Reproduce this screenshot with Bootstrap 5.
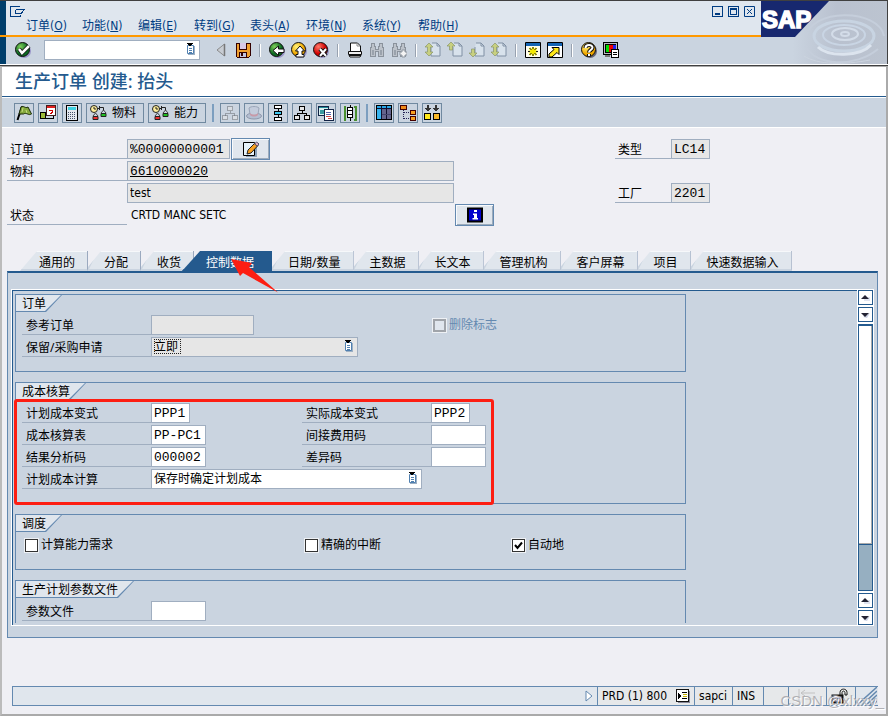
<!DOCTYPE html>
<html lang="zh-CN">
<head>
<meta charset="utf-8">
<meta name="viewport" content="width=device-width, initial-scale=1">
<title>生产订单 创建: 抬头</title>
<link href="https://cdn.jsdelivr.net/npm/bootstrap@5.3.0/dist/css/bootstrap.min.css" rel="stylesheet">
<style>
:root{--navy:#003e6b;--blue:#245a8e;--edge:#6489b0;--bar:#cad4e0;--light:#e0e6ed;--rule:#a0aec0;--ro:#e6e6e6}
body{font:12px/20px "Noto Sans","Noto Sans CJK SC",sans-serif;color:#000;background:#efeff4;min-height:100vh}
svg{display:block;flex:none}
button{padding:0;border:0;background:none;color:inherit}
.defs{position:absolute;width:0;height:0}
.i16{width:16px;height:16px}
/* window head */
.head{border-top:1px solid #404040;border-bottom:1px solid #404040;background:#fff;padding-bottom:1px}
.menu-zone{height:34px;background:#dfe6ee;border-left:6px solid var(--navy)}
.orange{height:2px;background:#f90}
.std-bar{height:27px;background:var(--bar);border-left:6px solid var(--navy);padding:0 0 1px 6px}
.menu-row{height:17px;padding:0 12px 0 20px}
.menu-row a{width:56px;color:#003c82;text-decoration:none;font-size:12px;line-height:17px;white-space:nowrap}
.title-row{height:17px;padding:4px 5px 0 4px}
.win-btn{color:#003c82}
.slot{width:22px;height:22px;display:flex;align-items:center;justify-content:center}
.bar-sep{width:12px;height:13px;display:flex;justify-content:center}
.bar-sep::before{content:"";width:2px;background:linear-gradient(90deg,#98a2b0 50%,#fff 50%)}
.cmd{width:156px;height:20px;margin:0 10px}
.logo{width:127px;height:63px}
/* work area frame */
.frame{border:2px solid #aaa;border-top-width:1px;border-left-color:#bbb}
.title{background:#fff;height:30px;border-bottom:1px solid var(--blue);color:var(--blue);font-size:18px;line-height:29px;padding-left:13px;margin:0;font-weight:500}
.app-bar{height:31px;background:var(--bar);border-top:1px solid #fff;border-bottom:1px solid #fff;padding:0 12px;gap:4px}
.tb{height:20px;min-width:20px;border:1px solid #7089a0;display:flex;align-items:center;justify-content:center}
.tb-wide{width:58px;gap:2px;padding-left:3px;justify-content:flex-start}
.tb-sep{width:2px;height:18px;margin:0 2px;background:#7c9ebf}
.body-pad{padding:10px 8px 8px 5px}
/* form lines */
.line{height:20px;margin-bottom:2px}
.line-lg{height:22px;padding:1px 0}
.lab{width:120px;height:20px;border-bottom:1px solid var(--rule);padding-left:3px;line-height:22px;white-space:nowrap}
.grp .lab{width:129px;padding-left:4px}
.side .lab{width:56px}
.fld{height:20px;border:1px solid var(--rule);border-radius:0;background:#fff;padding:0 2px;color:#000;font:13px/18px "Liberation Mono",monospace;outline:0;min-width:0}
.fld[readonly],.fld:disabled{background:var(--ro);opacity:1}
.ui{font-family:"DejaVu Sans Condensed","Noto Sans","Noto Sans CJK SC",sans-serif}
.fld-ui{font:12px/18px "DejaVu Sans Condensed","Noto Sans","Noto Sans CJK SC",sans-serif}
select.fld{appearance:none;padding:0 2px}
.w4{width:39px}.w6{width:55px}.w10{width:103px}.w20{width:207px}.w27{width:271px}.w33{width:327px}
.combo{position:relative}
.combo svg{position:absolute;right:5px;top:3px;pointer-events:none}
.combo .focus-box{position:absolute;left:3px;top:2px;width:27px;height:15px;border:1px dotted #222;pointer-events:none}
.push{width:39px;height:22px;margin-left:1px;border:1px solid var(--edge);background:var(--light);box-shadow:inset 1px 1px #f8fafc,inset -1px -1px #9cabbb;display:flex;align-items:center;justify-content:center}
.left-form{width:608px}
.side-gap{margin-bottom:22px}
/* tabs */
.tabs{margin:25px 0 0 13px;height:20px}
.tab{position:relative;height:20px;padding:0 12px 0 16px;line-height:23px;background:var(--light);border-right:1px solid #9ba9bf;border-bottom:2px solid var(--bar);box-shadow:inset 0 1px #f6f8fa;clip-path:polygon(0 100%,0 16px,13px 0,100% 0,100% 100%);white-space:nowrap}
.tab::before{content:"";position:absolute;left:0;top:8px;width:6px;height:12px;background:var(--bar);clip-path:polygon(0 60%,100% 0,0 100%)}
.tab-first{padding:0 12px 0 19px;clip-path:polygon(0 100%,17px 0,100% 0,100% 100%)}
.tab-first::before{display:none}
.tab.active{margin-left:-12px;padding:0 17px 0 24px;background:var(--blue);border-color:var(--blue);box-shadow:none;color:#fff;clip-path:polygon(0 100%,18px 0,100% 0,100% 100%)}
.tab.active::before{display:none}
.panel{border:1px solid var(--edge);border-top:2px solid var(--blue);background:var(--bar);padding:16px 3px 11px 3px}
.pane{border:1px solid #fff;border-right:0;min-width:0}
.pane-in{border:solid var(--blue);border-width:1px 0 0 1px;padding:3px 2px 2px;display:flex;flex-direction:column;gap:10px}
.grp{width:671px;max-width:100%;border:1px solid var(--edge);padding-bottom:12px;position:relative}
.grp-open{border-bottom:0;padding-bottom:0}
.grp legend{float:left;width:auto;height:17px;margin:0;padding:0 16px 0 6px;font-size:12px;line-height:17px;position:relative;isolation:isolate;background:var(--edge);clip-path:polygon(0 0,100% 0,calc(100% - 16px) 100%,0 100%)}
.grp legend::before{content:"";position:absolute;z-index:-1;inset:0 1px 1px 0;background:var(--light);clip-path:polygon(0 0,100% 0,calc(100% - 16px) 100%,0 100%)}
.grp-body{clear:both;padding:3px 0 0 6px}
.col-a{width:280px}
.col-b{width:281px}
.chk{appearance:none;width:13px;height:13px;margin:0 3px 0 0;border:1px solid #333;background:#fff center/11px no-repeat;outline:1px solid #eef1f5;border-radius:0;flex:none}
.chk:checked{background-image:url("data:image/svg+xml,%3Csvg xmlns='http://www.w3.org/2000/svg' viewBox='0 0 11 11'%3E%3Cpath d='M2 5l2.500 3L9 2.500' fill='none' stroke='%23000' stroke-width='2'/%3E%3C/svg%3E")}
.chk:disabled{background-color:#e0e6ee;border:2px solid #a0a4aa}
.dim{color:var(--edge);padding-left:130px}
.chk-row{height:22px;padding:0 0 2px 3px}
.marker{position:absolute;left:-2px;top:16px;width:480px;height:106px;border:3px solid #fd1e12;border-radius:3px;pointer-events:none}
/* scroll bar */
.scroll{width:17px;background:#fff;padding:1px;gap:2px}
.sb{width:15px;height:15px;border:1px solid var(--blue);background:#fff;display:flex;align-items:center;justify-content:center}
.trough{border:1px solid var(--blue);background:#96afc1}
.thumb{height:83%;background:#fff;border-top:1px solid var(--blue);border-bottom:1px solid var(--blue);box-shadow:inset -1px -1px #aaa}
/* status bar */
.status{height:20px;margin-left:5px;border:1px solid var(--edge);border-right:0;background:var(--light)}
.cell{border-left:1px solid var(--edge);background:#e6e8ea;padding:0 4px;display:flex;align-items:center;flex:none;white-space:nowrap}
.cell-sys{width:97px;justify-content:space-between}
.cell-host{width:38px}.cell-ins{width:31px}
.cell-b{width:25px}.cell-c{width:38px}.cell-d{width:29px}.cell-e{width:23px;background:var(--light);padding:0}
.watermark{position:absolute;right:2px;bottom:4px;font:15px/18px "Liberation Sans",sans-serif;color:rgba(160,160,165,.8);text-shadow:1px 1px #fff;pointer-events:none}
</style>
<script src="https://cdn.jsdelivr.net/npm/bootstrap@5.3.0/dist/js/bootstrap.bundle.min.js"></script>
</head>
<body class="d-flex flex-column m-0">
<svg class="defs" aria-hidden="true">
<defs>
<radialGradient id="gG" cx=".35" cy=".3"><stop offset="0" stop-color="#7fd05a"/><stop offset="1" stop-color="#0c6a22"/></radialGradient>
<radialGradient id="gY" cx=".35" cy=".3"><stop offset="0" stop-color="#fff27a"/><stop offset="1" stop-color="#f0a800"/></radialGradient>
<radialGradient id="gR" cx=".35" cy=".3"><stop offset="0" stop-color="#ff7a6a"/><stop offset="1" stop-color="#d00000"/></radialGradient>
<symbol id="ok" viewBox="0 0 16 16"><circle cx="9" cy="9" r="7" fill="#9a96c8"/><circle cx="7.500" cy="7.500" r="7" fill="url(#gG)" stroke="#111"/><path d="M4 7l3 4 7-7" fill="none" stroke="#111" stroke-width="4"/><path d="M4 7l3 4 7-7" fill="none" stroke="#fff" stroke-width="2.500"/></symbol>
<symbol id="list" viewBox="0 0 9 12"><path d="M2 3h7v9H2z" fill="#9db0c4"/><path d="M1.500 2.500h6v8h-6z" fill="#fff" stroke="#5080b0"/><path d="M3 5.500h3M3 7.500h3M3 9.500h3" stroke="#5080b0"/><path d="M1 0h6v1H6v1H5v1H3V2H2V1H1z"/></symbol>
<symbol id="tri" viewBox="0 0 16 16"><path d="M11.500 2v12L4 8z" fill="#c8ccd2" stroke="#8a8a8a"/><path d="M11.500 2v12" stroke="#777" stroke-width="1.500"/></symbol>
<symbol id="save" viewBox="0 0 16 16" shape-rendering="crispEdges"><path d="M1 1h14v13l-1 1H2l-1-1z" fill="#f0a030" stroke="#300"/><path d="M4 1h8v7H4z" fill="#300"/><path d="M5 1h6v6H5z" fill="#d8c8e8"/><path d="M4 10h8v5H4z" fill="#300"/><path d="M5 11h6v4H5z" fill="#c4c4e0"/><path d="M6 11h2v3H6z" fill="#300"/></symbol>
<symbol id="back" viewBox="0 0 16 16"><circle cx="9" cy="9" r="7" fill="#9a96c8"/><circle cx="7.500" cy="7.500" r="7" fill="url(#gG)" stroke="#111"/><path d="M4 8.500L9.500 4v3H15v3.500H9.500v3z" fill="#fff" stroke="#111"/></symbol>
<symbol id="exit" viewBox="0 0 16 16"><circle cx="9" cy="9" r="7" fill="#9a96c8"/><circle cx="7.500" cy="7.500" r="7" fill="url(#gY)" stroke="#111"/><path d="M9 4L4.500 9H7v3.500H5V15h8v-2.500h-2V9h2.500z" fill="#fff" stroke="#111"/></symbol>
<symbol id="cancel" viewBox="0 0 16 16"><circle cx="9" cy="9" r="7" fill="#9a96c8"/><circle cx="7.500" cy="7.500" r="7" fill="url(#gR)" stroke="#111"/><path d="M7 7l6 7M13 7l-6 7" stroke="#111" stroke-width="4"/><path d="M7 7l6 7M13 7l-6 7" stroke="#fff" stroke-width="2"/></symbol>
<symbol id="print" viewBox="0 0 16 16"><path d="M3.500 1h7l3 3v6h-10z" fill="#fff" stroke="#111"/><path d="M10 1v3h3" fill="none" stroke="#888"/><path d="M1.500 9.500h13v3h-13z" fill="#eee" stroke="#111"/><path d="M2 13.500h12L13 15H3z" fill="#fff" stroke="#111"/></symbol>
<symbol id="find" viewBox="0 0 16 16" shape-rendering="crispEdges"><path d="M2.500 1.500h3v3h1v3h3v-3h1v-3h3v4h1v9h-5v-5h-3v5h-5v-9h1z" fill="#bcc2ca" stroke="#8a929c"/><path d="M3 8h2v5H3zM11 8h2v5h-2z" fill="#9aa2ac"/></symbol>
<symbol id="plus" viewBox="0 0 16 16"><path d="M9 10h2V8h3v2h2v3h-2v2h-3v-2H9z" fill="#f4f4f4" stroke="#9098a2"/></symbol>
<symbol id="pg" viewBox="0 0 16 16"><path d="M6 5V14h9V4l-3-3H7" fill="#d8e2ec" stroke="#8090a4"/><path d="M12 1v3h3" fill="none" stroke="#8090a4"/></symbol>
<symbol id="up" viewBox="0 0 16 16"><path d="M4 0l4 4H5.500v4h-3V4H0z" fill="#c8d080" stroke="#8a9668" stroke-width=".7"/></symbol>
<symbol id="dn" viewBox="0 0 16 16"><path d="M4 15l4-4H5.500V7h-3v4H0z" fill="#c8d080" stroke="#8a9668" stroke-width=".7"/></symbol>
<symbol id="ud" viewBox="0 0 16 16"><path d="M4 1l4 4H5.500v5H8l-4 4-4-4h2.500V5H0z" fill="#c8d080" stroke="#8a9668" stroke-width=".7"/></symbol>
<symbol id="newwin" viewBox="0 0 16 16"><path d="M.5.5h15v15H.5z" fill="#fffef0" stroke="#000"/><path d="M1 1h14v3H1z" fill="#1464b4"/><path d="M8 5v9M3.500 9.500h9M4.500 6l7 7M11.500 6l-7 7" stroke="#f2e800" stroke-width="2"/><path d="M8 5v2M8 12v2M3 9.500h2M11 9.500h2M4.500 6l2 2M11.500 6l-2 2M4.500 13l2-2M11.500 13l-2-2" stroke="#222"/></symbol>
<symbol id="short" viewBox="0 0 16 16"><path d="M.5.5h15v15H.5z" fill="#fff" stroke="#000"/><path d="M1 1h14v3H1z" fill="#1464b4"/><path d="M5 5.500h7v7l-2-2-5 4.500H2v-3l5-4.500z" fill="#ffe81a" stroke="#000"/></symbol>
<symbol id="help" viewBox="0 0 16 16"><circle cx="9" cy="9" r="7" fill="#667"/><circle cx="7.500" cy="7.500" r="7" fill="url(#gY)" stroke="#111"/><path d="M4.500 6c0-4 7-4 7-.5 0 2.500-3.500 2.500-3.500 5M8 12v2" fill="none" stroke="#111" stroke-width="4"/><path d="M4.500 6c0-4 7-4 7-.5 0 2.500-3.500 2.500-3.500 5M8 12v2" fill="none" stroke="#fff" stroke-width="2"/></symbol>
<symbol id="mon" viewBox="0 0 16 16" shape-rendering="crispEdges"><path d="M.5.5h14v12H.5z" fill="#b8bcc0" stroke="#000"/><path d="M2 2h11v9H2z" fill="#000"/><path d="M3 3h3v7H3z" fill="#0d0"/><path d="M6 3h4v7H6z" fill="#e00"/><path d="M10 3h3v4h-3z" fill="#22e"/><path d="M2 13h5v2H2z" fill="#777"/><path d="M8.500 7.500h7v8h-7z" fill="#fff" stroke="#000"/><path d="M10 10.500h4M10 12.500h4" stroke="#000"/></symbol>
<symbol id="flag" viewBox="0 0 16 16"><path d="M1.500 15L6 1.500" stroke="#000" stroke-width="2"/><path d="M5 2c3-2 4 2 7 0l3.500 7c-3 2-5-2-8 0H3z" fill="#84a83c" stroke="#1a2a08"/><path d="M7 3l-1 4M10 5l1 3" stroke="#c4dc80"/></symbol>
<symbol id="cal7" viewBox="0 0 16 16" shape-rendering="crispEdges"><path d="M.5 7.500h5v6h-5z" fill="#9cba3a" stroke="#000"/><path d="M5.500 9.500h8v4h-10" fill="none" stroke="#000"/><path d="M6.500.5h9v10h-9z" fill="#fff" stroke="#402020"/><path d="M7 1h8v2H7z" fill="#e02020"/><path d="M9 5h3v2h-1v1h-1v1" fill="none" stroke="#c00"/></symbol>
<symbol id="calc" viewBox="0 0 16 16" shape-rendering="crispEdges"><path d="M2.500.5h11v15h-11z" fill="#e4e8ee" stroke="#000"/><path d="M4 2h8v3H4z" fill="#3fd0e0"/><path d="M4 7.500h8M4 9.500h8M4 11.500h8M4 13.500h8" stroke="#46506a" stroke-dasharray="1 1"/></symbol>
<symbol id="check2" viewBox="0 0 20 16"><circle cx="4" cy="4" r="3.500" fill="#ffef9a" stroke="#222"/><path d="M4 2v2h2" fill="none" stroke="#222"/><path d="M7.500 3.500h2M9.500 1v4M9.500 2.500h4v3" fill="none" stroke="#222"/><path d="M3 11l2.500-3L8 11M11 8l2.500-3L16 8" fill="none" stroke="#444"/><path d="M3 11.500h5v3H3z" fill="#f03030" stroke="#222"/><path d="M11 8.500h5v3h-5z" fill="#20c020" stroke="#222"/></symbol>
<symbol id="tree" viewBox="0 0 16 16" shape-rendering="crispEdges"><path d="M8 5v3M3.500 11V8.500h9V11" fill="none" stroke="currentColor"/><path d="M5.500 1.500h5v4h-5zM.5 10.500h5v4h-5z" fill="#e6e6e6" stroke="currentColor"/><path d="M10.500 10.500h5v4h-5z" fill="var(--leaf,#e6e6e6)" stroke="currentColor"/></symbol>
<symbol id="hat" viewBox="0 0 16 16"><ellipse cx="8" cy="11" rx="7.500" ry="3" fill="#b4bfd2" stroke="#8d97ab"/><path d="M4 9l-1-6c2-2 8-2 10 0l-1 6c-2 2-6 2-8 0z" fill="#c3ccdc" stroke="#9aa5b8"/><path d="M4 8c2 2 6 2 8 0v2c-2 2-6 2-8 0z" fill="#c89aa8"/></symbol>
<symbol id="chain" viewBox="0 0 16 16" shape-rendering="crispEdges"><path d="M8 3v12" stroke="#000"/><path d="M4.500.5h7v3h-7zM4.500 12.500h7v3h-7z" fill="#fff" stroke="#000"/><path d="M4.500 6.500h7v3h-7z" fill="#40c8f0" stroke="#000"/></symbol>
<symbol id="copy" viewBox="0 0 16 16" shape-rendering="crispEdges"><path d="M.5 1.500h10v9H.5z" fill="#d8f0f0" stroke="#124"/><path d="M1 2h9v1H1z" fill="#1f8a98"/><path d="M2 5h4v4H2z" fill="#3a9aa0"/><path d="M6.500 4.500h9v11h-9z" fill="#fff" stroke="#124"/><path d="M8 7.500h5M8 9.500h5" stroke="#56a"/><path d="M8 11.500h5M10 13.500h4" stroke="#c44"/></symbol>
<symbol id="film" viewBox="0 0 16 16" shape-rendering="crispEdges"><path d="M4 1.500H2.500v13H4M12 1.500h1.500v13H12" fill="none" stroke="#4a9030" stroke-width="2"/><path d="M8 0v16" stroke="#000"/><path d="M5.500 2.500h5v10h-5z" fill="#fff" stroke="#000"/><path d="M6 5.500h4M6 9.500h4" stroke="#000"/></symbol>
<symbol id="table" viewBox="0 0 16 16" shape-rendering="crispEdges"><path d="M.5.5h15v14H.5z" fill="#64648c" stroke="#000"/><path d="M1 1h14v2H1z" fill="#28a8e8"/><path d="M1 3h4v11H1z" fill="#38b4ee"/><path d="M5.500 1v13M10.500 1v13M1 3.500h14" stroke="#101030"/><path d="M6 9.500h9" stroke="#44446c"/></symbol>
<symbol id="hier" viewBox="0 0 16 16" shape-rendering="crispEdges"><path d="M3.500 5v9M4 7.500h7M4 13.500h7" fill="none" stroke="#225" stroke-dasharray="1 1"/><path d="M.5.5h6v4h-6z" fill="#f08a18" stroke="#400"/><path d="M10.500 5.500h5v4h-5zM10.500 11.500h5v4h-5z" fill="#f8a020" stroke="#400"/></symbol>
<symbol id="sum" viewBox="0 0 16 16" shape-rendering="crispEdges"><path d="M3 0h2v3h2v1H6v1H5v1H3V5H2V4H1V3h2zM11 0h2v3h2v1h-1v1h-1v1h-2V5h-1V4H9V3h2z" fill="#333"/><path d="M.5 8.500h6v6h-6z" fill="#ffe81a" stroke="#000"/><path d="M9.500 8.500h6v6h-6z" fill="#f8b828" stroke="#000"/></symbol>
<symbol id="pencil" viewBox="0 0 16 16"><path d="M3 4h11v12H3z" fill="#8aa0b8"/><path d="M.5 1.500h11v13H.5z" fill="#e6f2fa" stroke="#000"/><path d="M4 13l1-4 7-7 3 2.500L8 12z" fill="#f8a020" stroke="#222"/><path d="M11.500 3l2-2L16 3l-1.500 2z" fill="#f0b8c0" stroke="#446"/></symbol>
<symbol id="info" viewBox="0 0 16 16"><path d="M1 1.500h14v13H1z" fill="#00c" stroke="#000" stroke-width="2"/><path d="M7 3h3v2H7zM6 6.500h4V11h1v1.500H5.500V11H7V8H6z" fill="#fff"/></symbol>
<symbol id="au" viewBox="0 0 9 6"><path d="M3 2h6v4H3z" fill="#dfe3ef"/><path d="M4 0L8 4H0z" fill="#223"/></symbol>
<symbol id="ad" viewBox="0 0 9 6"><path d="M2 5L9 1 6 6z" fill="#ccd2e4"/><path d="M4 5L0 1h8z" fill="#223"/></symbol>
</defs>
</svg>

<header class="head d-flex">
  <div class="flex-grow-1">
    <div class="menu-zone">
      <div class="title-row d-flex justify-content-between">
        <button aria-label="系统菜单"><svg width="15" height="11" viewBox="0 0 15 11" fill="none" stroke="#003c82" shape-rendering="crispEdges"><path d="M10 .5H.5v10h10V9M5.500 3.500h9M5.500 7.500h6M5.500 3.500v4M14 4l-3 4"/></svg></button>
        <div class="d-flex gap-1">
          <button class="win-btn" aria-label="最小化"><svg width="12" height="11" viewBox="0 0 12 11" fill="none" stroke="currentColor" shape-rendering="crispEdges"><path d="M.5.5h10v10H.5z"/><path d="M3 8h5" stroke-width="2"/></svg></button>
          <button class="win-btn" aria-label="最大化"><svg width="12" height="11" viewBox="0 0 12 11" fill="none" stroke="currentColor" shape-rendering="crispEdges"><path d="M.5.5h10v10H.5zM2.500 3.500h6v5h-6zM2 2.500h7"/></svg></button>
          <button class="win-btn" aria-label="关闭"><svg width="12" height="11" viewBox="0 0 12 11" fill="none" stroke="currentColor"><path d="M.5.5h10v10H.5zM3 3l5 5M8 3L3 8"/></svg></button>
        </div>
      </div>
      <nav class="menu-row ui d-flex">
        <a href="#">订单(<u>O</u>)</a><a href="#">功能(<u>N</u>)</a><a href="#">编辑(<u>E</u>)</a><a href="#">转到(<u>G</u>)</a><a href="#">表头(<u>A</u>)</a><a href="#">环境(<u>N</u>)</a><a href="#">系统(<u>Y</u>)</a><a href="#">帮助(<u>H</u>)</a>
      </nav>
    </div>
    <div class="orange"></div>
    <div class="std-bar d-flex align-items-center">
      <button class="slot" aria-label="回车"><svg class="i16"><use href="#ok"/></svg></button>
      <div class="combo cmd"><input class="fld w-100 d-block" aria-label="命令"><svg width="9" height="12"><use href="#list"/></svg></div>
      <button class="slot" aria-label="收起"><svg class="i16"><use href="#tri"/></svg></button>
      <button class="slot" aria-label="保存"><svg class="i16"><use href="#save"/></svg></button>
      <span class="bar-sep"></span>
      <button class="slot" aria-label="返回"><svg class="i16"><use href="#back"/></svg></button>
      <button class="slot" aria-label="退出"><svg class="i16"><use href="#exit"/></svg></button>
      <button class="slot" aria-label="取消"><svg class="i16"><use href="#cancel"/></svg></button>
      <span class="bar-sep"></span>
      <button class="slot" aria-label="打印"><svg class="i16"><use href="#print"/></svg></button>
      <button class="slot" aria-label="查找"><svg class="i16"><use href="#find"/></svg></button>
      <button class="slot" aria-label="继续查找"><svg class="i16"><use href="#find"/><use href="#plus"/></svg></button>
      <span class="bar-sep"></span>
      <button class="slot" aria-label="首页"><svg class="i16"><use href="#pg"/><use href="#ud"/></svg></button>
      <button class="slot" aria-label="上一页"><svg class="i16"><use href="#pg"/><use href="#up"/></svg></button>
      <button class="slot" aria-label="下一页"><svg class="i16"><use href="#pg"/><use href="#dn"/></svg></button>
      <button class="slot" aria-label="末页"><svg class="i16"><use href="#pg"/><use href="#ud"/></svg></button>
      <span class="bar-sep"></span>
      <button class="slot" aria-label="新建会话"><svg class="i16"><use href="#newwin"/></svg></button>
      <button class="slot" aria-label="快捷方式"><svg class="i16"><use href="#short"/></svg></button>
      <span class="bar-sep"></span>
      <button class="slot" aria-label="帮助"><svg class="i16"><use href="#help"/></svg></button>
      <button class="slot" aria-label="布局"><svg class="i16"><use href="#mon"/></svg></button>
    </div>
  </div>
  <svg class="logo" viewBox="0 0 127 63" aria-label="SAP">
    <defs><linearGradient id="fade" x1="0" x2="1"><stop offset=".25" stop-color="#cad4e0"/><stop offset=".6" stop-color="#b9c1cf"/><stop offset="1" stop-color="#bcc4d0"/></linearGradient></defs>
    <path d="M0 0h126v63H0z" fill="url(#fade)"/>
    <path d="M126 0h1v63h-1z" fill="#404040"/>
    <g fill="none" stroke="#d3dce8">
      <ellipse cx="84" cy="33" rx="4" ry="2" stroke-width="2"/>
      <ellipse cx="84" cy="33" rx="13" ry="6" stroke-width="2"/>
      <ellipse cx="83" cy="34" rx="21" ry="10" stroke-width="2" stroke="#c9d5e4"/>
      <ellipse cx="83" cy="35" rx="30" ry="15" stroke-width="3" stroke="#c8d4e2"/>
      <path d="M45 37c3-30 73-30 78-2M45 45c8 20 50 22 72 3" stroke-width="2" stroke="#c5cedb"/>
      <path d="M57 46c10 10 42 10 53-2" stroke-width="3" stroke="#dce4ee"/>
      <path d="M43 55c14 9 40 9 66 4" stroke="#ccd4df"/>
    </g>
    <path d="M0 0h68L34 36H0z" fill="#17286f"/>
    <text x="1" y="27" font-family="Liberation Sans, sans-serif" font-weight="700" font-size="24" fill="#fff" stroke="#fff" stroke-width="1.500">SAP</text>
  </svg>
</header>

<div class="frame flex-grow-1 d-flex flex-column position-relative">
  <h1 class="title">生产订单 创建: 抬头</h1>
  <div class="app-bar d-flex align-items-center">
    <button class="tb" aria-label="下达"><svg class="i16"><use href="#flag"/></svg></button>
    <button class="tb" aria-label="排产"><svg class="i16"><use href="#cal7"/></svg></button>
    <button class="tb" aria-label="成本"><svg class="i16"><use href="#calc"/></svg></button>
    <button class="tb tb-wide"><svg width="20" height="16"><use href="#check2"/></svg>物料</button>
    <button class="tb tb-wide"><svg width="20" height="16"><use href="#check2"/></svg>能力</button>
    <span class="tb-sep"></span>
    <button class="tb text-black-50" aria-label="层次"><svg class="i16 opacity-50"><use href="#tree"/></svg></button>
    <button class="tb" aria-label="抬头"><svg class="i16"><use href="#hat"/></svg></button>
    <button class="tb" aria-label="工序"><svg class="i16"><use href="#chain"/></svg></button>
    <button class="tb" aria-label="组件"><svg class="i16"><use href="#tree"/></svg></button>
    <button class="tb" aria-label="凭证"><svg class="i16"><use href="#copy"/></svg></button>
    <button class="tb" aria-label="序列"><svg class="i16"><use href="#film"/></svg></button>
    <span class="tb-sep"></span>
    <button class="tb" aria-label="表"><svg class="i16"><use href="#table"/></svg></button>
    <button class="tb" aria-label="结构"><svg class="i16"><use href="#hier"/></svg></button>
    <button class="tb" aria-label="汇总"><svg class="i16"><use href="#sum"/></svg></button>
  </div>

  <main class="body-pad flex-grow-1 d-flex flex-column">
    <div class="d-flex">
      <div class="left-form">
        <div class="line-lg d-flex align-items-center"><label class="lab" for="ord">订单</label><input id="ord" class="fld w10" value="%00000000001" readonly><button class="push" aria-label="编辑长文本"><svg class="i16"><use href="#pencil"/></svg></button></div>
        <div class="line-lg d-flex"><label class="lab" for="mat">物料</label><input id="mat" class="fld w33 text-decoration-underline" value="6610000020" readonly></div>
        <div class="line-lg d-flex"><span class="lab border-0"></span><input class="fld fld-ui w33" value="test" aria-label="物料描述" readonly></div>
        <div class="line-lg d-flex align-items-center"><span class="lab">状态</span><span class="w33 ui ps-1">CRTD MANC SETC</span><button class="push" aria-label="状态信息"><svg class="i16"><use href="#info"/></svg></button></div>
      </div>
      <div class="side">
        <div class="line-lg side-gap d-flex"><label class="lab" for="typ">类型</label><input id="typ" class="fld w4" value="LC14" readonly></div>
        <div class="line-lg d-flex"><label class="lab" for="plant">工厂</label><input id="plant" class="fld w4" value="2201" readonly></div>
      </div>
    </div>

    <div class="tabs d-flex" role="tablist">
      <button class="tab tab-first" role="tab">通用的</button><button class="tab" role="tab">分配</button><button class="tab" role="tab">收货</button><button class="tab active" role="tab" aria-selected="true">控制数据</button><button class="tab" role="tab">日期/数量</button><button class="tab" role="tab">主数据</button><button class="tab" role="tab">长文本</button><button class="tab" role="tab">管理机构</button><button class="tab" role="tab">客户屏幕</button><button class="tab" role="tab">项目</button><button class="tab" role="tab">快速数据输入</button>
    </div>
    <div class="panel d-flex position-relative">
      <svg class="position-absolute top-0 start-0 overflow-visible z-3 pe-none" width="1" height="1"><path d="M223 -14L244 -10 241 -6 270 19.500 235 0 232 3z" fill="#fd1e12"/></svg>
      <div class="pane flex-grow-1">
        <div class="pane-in">
          <fieldset class="grp">
            <legend>订单</legend>
            <div class="grp-body">
              <div class="line d-flex"><div class="col-b d-flex"><label class="lab" for="ref">参考订单</label><input id="ref" class="fld w10" readonly></div>
                <label class="d-flex align-items-center dim"><input type="checkbox" class="chk" disabled>删除标志</label></div>
              <div class="line d-flex"><label class="lab" for="res">保留/采购申请</label><div class="combo"><select id="res" class="fld fld-ui w20 d-block" disabled><option>立即</option></select><span class="focus-box"></span><svg width="9" height="12"><use href="#list"/></svg></div></div>
            </div>
          </fieldset>
          <fieldset class="grp">
            <legend>成本核算</legend>
            <div class="grp-body">
              <div class="line d-flex"><div class="col-a d-flex"><label class="lab" for="pv">计划成本变式</label><input id="pv" class="fld w4" value="PPP1"></div><label class="lab" for="av">实际成本变式</label><input id="av" class="fld w4" value="PPP2"></div>
              <div class="line d-flex"><div class="col-a d-flex"><label class="lab" for="cs">成本核算表</label><input id="cs" class="fld w6" value="PP-PC1"></div><label class="lab" for="oh">间接费用码</label><input id="oh" class="fld w6"></div>
              <div class="line d-flex"><div class="col-a d-flex"><label class="lab" for="ra">结果分析码</label><input id="ra" class="fld w6" value="000002"></div><label class="lab" for="vk">差异码</label><input id="vk" class="fld w6"></div>
              <div class="line d-flex"><label class="lab" for="pc">计划成本计算</label><div class="combo"><select id="pc" class="fld fld-ui w27 d-block"><option>保存时确定计划成本</option></select><svg width="9" height="12"><use href="#list"/></svg></div></div>
            </div>
            <div class="marker"></div>
          </fieldset>
          <fieldset class="grp">
            <legend>调度</legend>
            <div class="grp-body">
              <div class="chk-row d-flex">
                <label class="col-a d-flex align-items-center"><input type="checkbox" class="chk">计算能力需求</label>
                <label class="w20 d-flex align-items-center"><input type="checkbox" class="chk">精确的中断</label>
                <label class="d-flex align-items-center"><input type="checkbox" class="chk" checked>自动地</label>
              </div>
            </div>
          </fieldset>
          <fieldset class="grp grp-open">
            <legend>生产计划参数文件</legend>
            <div class="grp-body"><div class="line d-flex"><label class="lab" for="pf">参数文件</label><input id="pf" class="fld w6"></div></div>
          </fieldset>
        </div>
      </div>
      <div class="scroll d-flex flex-column">
        <button class="sb" aria-label="上滚"><svg width="9" height="6"><use href="#au"/></svg></button>
        <button class="sb" aria-label="下滚"><svg width="9" height="6"><use href="#ad"/></svg></button>
        <div class="trough flex-grow-1"><div class="thumb"></div></div>
        <button class="sb" aria-label="上滚"><svg width="9" height="6"><use href="#au"/></svg></button>
        <button class="sb" aria-label="下滚"><svg width="9" height="6"><use href="#ad"/></svg></button>
      </div>
    </div>

    <footer class="status ui d-flex mt-auto">
      <span class="flex-grow-1"></span>
      <button class="pe-1" aria-label="展开"><svg width="8" height="12" viewBox="0 0 8 12"><path d="M1 1l6 5-6 5z" fill="#fff" stroke="#6489b0"/></svg></button>
      <span class="cell cell-sys">PRD (1) 800<svg width="14" height="14" viewBox="0 0 14 14" shape-rendering="crispEdges"><path d="M2 2h12v12H2z" fill="#889"/><path d="M.5.5h12v12H.5z" fill="#fff" stroke="#111"/><path d="M2 4l3 3-3 3z"/><path d="M6 3.500h5M6 9.500h5" stroke="#000"/><path d="M7 5.500h4M7 7.500h4" stroke="#c8b400"/></svg></span>
      <span class="cell cell-host">sapci</span>
      <span class="cell cell-ins">INS</span>
      <span class="cell cell-b"></span>
      <span class="cell cell-c"><svg width="24" height="16" viewBox="0 0 24 16" fill="none" stroke="#c2c2c2"><path d="M6 1v14M8 5h14M8 5l4-3M8 5l4 3M10 11h10"/></svg></span>
      <span class="cell cell-d"><svg width="18" height="16" viewBox="0 0 18 16"><path d="M9 8V4.500C9 0 16 0 16 4.500V7h-2V4.500c0-2-3-2-3 0V8" fill="#fff" stroke="#111"/><path d="M1.500 7.500h10v7h-10z" fill="#b4b4d0" stroke="#111" stroke-width="2"/><path d="M4 10v3M6.500 10v3M9 10v3" stroke="#556"/></svg></span>
      <span class="cell cell-e"><svg width="21" height="18" viewBox="0 0 21 18" stroke="#6489b0" fill="none"><path d="M1 18L21 0M6 18L21 4M10 18L21 8M14 18l7-6M17 18l4-4" stroke-width="1.500"/></svg></span>
    </footer>
  </main>
  <div class="watermark">CSDN @xlxxy_</div>
</div>
</body>
</html>
